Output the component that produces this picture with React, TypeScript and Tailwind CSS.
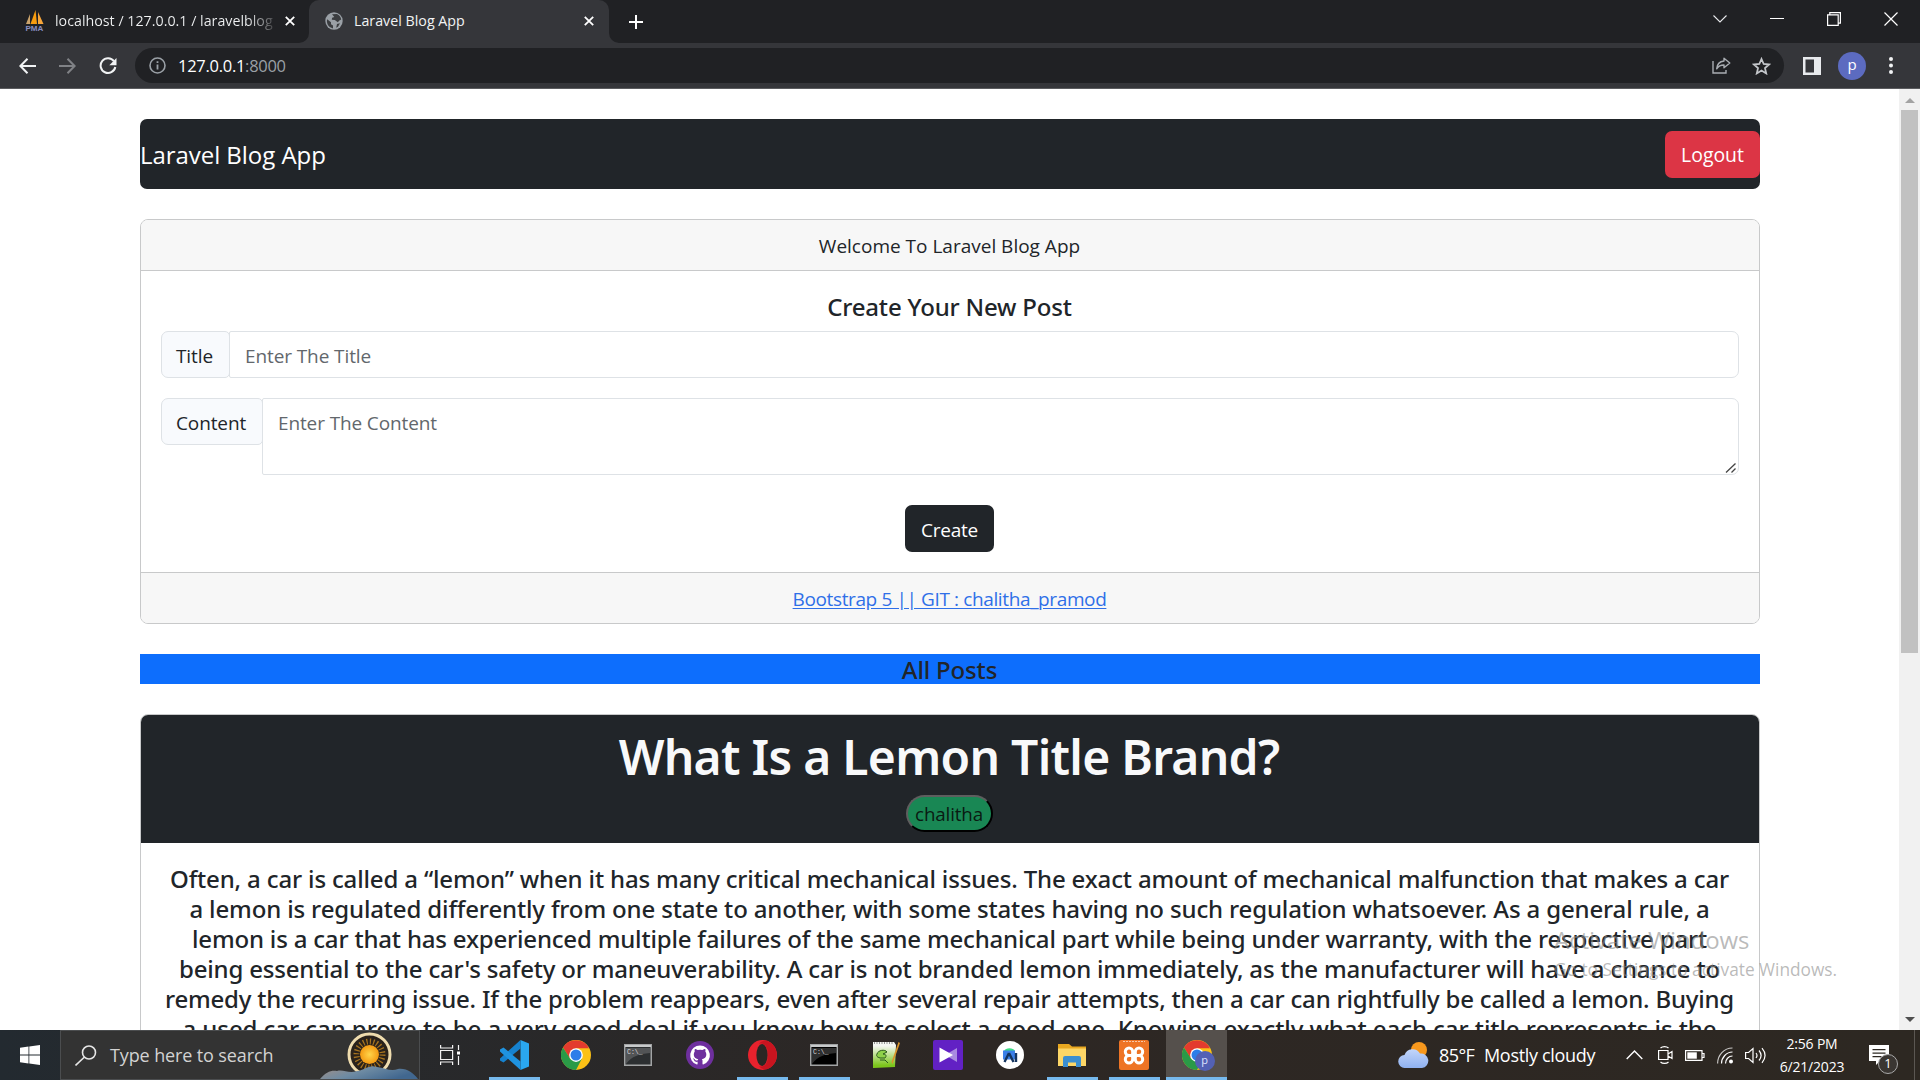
import React from "react";
import type { ReactNode } from "react";

const postLines: { text: string; tracking: string }[] = [
  { text: "Often, a car is called a “lemon” when it has many critical mechanical issues. The exact amount of mechanical malfunction that makes a car", tracking: "tracking-[-0.153px]" },
  { text: "a lemon is regulated differently from one state to another, with some states having no such regulation whatsoever. As a general rule, a", tracking: "tracking-[-0.146px]" },
  { text: "lemon is a car that has experienced multiple failures of the same mechanical part while being under warranty, with the respective part", tracking: "tracking-[-0.186px]" },
  { text: "being essential to the car's safety or maneuverability. A car is not branded lemon immediately, as the manufacturer will have a chance to", tracking: "tracking-[-0.188px]" },
  { text: "remedy the recurring issue. If the problem reappears, even after several repair attempts, then a car can rightfully be called a lemon. Buying", tracking: "tracking-[-0.202px]" },
  { text: "a used car can prove to be a very good deal if you know how to select a good one. Knowing exactly what each car title represents is the", tracking: "tracking-[-0.06px]" },
];

function PhpMyAdminIcon() {
  return (
    <svg width="22" height="22" viewBox="0 0 22 22">
      <path d="M6 4 2 14h4z" fill="#c9a26b" />
      <path d="M11.5 0 6.5 14h6.5z" fill="#f89c0e" />
      <path d="M14 2l5.5 12H14z" fill="#f8a63a" />
      <text x="1.500" y="21" fontSize="8" fontWeight="700" fill="#8a8fc0" fontFamily="Liberation Sans, sans-serif">PMA</text>
    </svg>
  );
}

function GlobeIcon() {
  return (
    <svg width="18" height="18" viewBox="0 0 18 18">
      <circle cx="9" cy="9" r="8.7" fill="#9aa0a6" />
      <path d="M2.2 7.2 6 10.3v2l2 1.2v3A7.4 7.4 0 0 1 2.200 7.200zM7 2.200 12 2c2.400 1.200 3.800 3 4.200 5.500l-1.800 1-1.600 1.700-3-2.200-3-.3.300-2 2.200-.7zM12 12l3-.8-2 3.600-1.800.9z" fill="#3b3d40" />
    </svg>
  );
}

function CloseIcon() {
  return (
    <svg width="10" height="10" viewBox="0 0 10 10" stroke="#fff" strokeWidth="1.8">
      <path d="M.8.8 9.200 9.200M9.200.8.8 9.200" />
    </svg>
  );
}

function TabStrip() {
  return (
    <div className="flex h-[43px] bg-[#202124] text-[14.25px] text-[#f1f3f4]">
      <div className="flex w-[309px] items-center pl-[24px] pb-[2px]">
        <PhpMyAdminIcon />
        <span className="ml-[9px] w-[218px] overflow-hidden whitespace-nowrap bg-linear-to-r from-[#f1f3f4] from-88% to-[#f1f3f4]/20 bg-clip-text text-transparent">
          localhost / 127.0.0.1 / laravelblog
        </span>
        <span className="ml-[12px]"><CloseIcon /></span>
      </div>
      <div className="relative flex w-[300px] items-center rounded-t-[10px] bg-[#35363a] pr-[15px] pb-[2px] pl-[16px]">
        <svg className="absolute bottom-0 -left-[10px]" width="10" height="10"><path d="M10 0v10H0A10 10 0 0 0 10 0z" fill="#35363a" /></svg>
        <svg className="absolute -right-[10px] bottom-0" width="10" height="10"><path d="M0 0v10h10A10 10 0 0 1 0 0z" fill="#35363a" /></svg>
        <GlobeIcon />
        <span className="ml-[11px] flex-1 whitespace-nowrap">Laravel Blog App</span>
        <CloseIcon />
      </div>
      <div className="flex flex-1 items-center pl-[20px]">
        <svg width="14" height="14" viewBox="0 0 14 14" stroke="#fff" strokeWidth="2"><path d="M7 0v14M0 7h14" /></svg>
      </div>
      <div className="flex h-[37px] items-center gap-[43px] pr-[22px]">
        <svg width="14" height="8" viewBox="0 0 14 8" fill="none" stroke="#e8eaed" strokeWidth="1.1"><path d="M.5.500 7 7 13.500.500" /></svg>
        <svg width="14" height="2" viewBox="0 0 14 2"><path d="M0 0h14v1H0z" fill="#fff" /></svg>
        <svg width="14" height="14" viewBox="0 0 14 14" fill="none" stroke="#fff" strokeWidth="1.200"><path d="M.6 2.800h10.600v10.600H.6zM2.800 2.800V.6h10.600v10.600h-2.200" /></svg>
        <svg width="14" height="14" viewBox="0 0 14 14" stroke="#fff" strokeWidth="1.200"><path d="M.500.500l13 13M13.500.500l-13 13" /></svg>
      </div>
    </div>
  );
}

function Toolbar() {
  return (
    <div className="flex h-[46px] items-center border-b border-[#5b5c5f] bg-[#35363a]">
      <div className="flex items-center gap-[23px] pl-[19px]">
        <svg width="17" height="16" viewBox="0 0 17 16" fill="none" stroke="#f1f3f4" strokeWidth="2"><path d="M17 8H2M8.500.800 1.400 8l7.100 7.200" /></svg>
        <svg width="17" height="16" viewBox="0 0 17 16" fill="none" stroke="#808286" strokeWidth="2"><path d="M0 8h15M8.500.800 15.600 8l-7.100 7.200" /></svg>
        <svg width="18" height="18" viewBox="0 0 18 18" fill="none"><path d="M15 4.200A7.400 7.400 0 1 0 16.300 10" stroke="#f1f3f4" strokeWidth="2" /><path d="M17.500 1v7.200h-7.200z" fill="#f1f3f4" /></svg>
      </div>
      <div className="ml-[18px] flex h-[35px] w-[1649px] items-center rounded-full bg-[#202124] pr-[13px] pl-[14px]">
        <svg width="17" height="17" viewBox="0 0 17 17" fill="none"><circle cx="8.500" cy="8.500" r="7.500" stroke="#9aa0a6" strokeWidth="1.600" /><path d="M8.500 7.500v5M8.500 4.300v1.700" stroke="#9aa0a6" strokeWidth="1.800" /></svg>
        <span className="ml-[12px] flex-1 pt-px text-[16.500px] tracking-[-0.28px] text-white">
          127.0.0.1<span className="text-[#9aa0a6]">:8000</span>
        </span>
        <svg width="19" height="17" viewBox="0 0 19 17" fill="none" stroke="#a9adb2" strokeWidth="1.400">
          <path d="M1 4v12h13v-3" /><path d="M12 1.200 17.800 6 12 10.800V8c-3.500 0-5.700 1.200-7.300 3.800C5 7.500 7.500 4.500 12 4z" strokeLinejoin="round" />
        </svg>
        <svg className="ml-[21px]" width="19" height="18" viewBox="0 0 19 18" fill="none" stroke="#c4c7cb" strokeWidth="1.800"><path d="m9.500 2 2.200 5 5.400.5-4.100 3.600 1.200 5.300-4.700-2.800-4.700 2.800L6 11.100 1.900 7.500 7.300 7z" /></svg>
      </div>
      <svg className="ml-[19px]" width="18" height="18" viewBox="0 0 18 18"><path d="M0 0h18v18H0zM2.500 2.500v13H11v-13z" fill="#e8eaed" fillRule="evenodd" /></svg>
      <div className="ml-[17px] flex size-[28px] items-center justify-center rounded-full bg-[#5c6bc0] pb-[2px] text-[15px] font-medium text-white">p</div>
      <svg className="ml-[23px]" width="4" height="17" viewBox="0 0 4 17" fill="#f1f3f4"><circle cx="2" cy="2" r="2" /><circle cx="2" cy="8.500" r="2" /><circle cx="2" cy="15" r="2" /></svg>
    </div>
  );
}

function Scrollbar() {
  return (
    <div className="flex w-[21px] flex-col items-center bg-[#f1f1f1]">
      <svg className="mt-[9px] mb-[7px]" width="10" height="5" viewBox="0 0 10 5"><path d="M0 5 5 0l5 5z" fill="#a3a3a3" /></svg>
      <div className="h-[543px] w-[17px] bg-[#c1c1c1]" />
      <svg className="mt-auto mb-[8px]" width="10" height="5" viewBox="0 0 10 5"><path d="M0 0h10L5 5z" fill="#505050" /></svg>
    </div>
  );
}

function CreatePostCard() {
  return (
    <section className="mt-[30px] flex h-[405px] flex-col overflow-hidden rounded-[8px] border border-[#c8c9ca] bg-white text-[19px]">
      <header className="flex h-[51px] items-center justify-center border-b border-[#c8c9ca] bg-[#f7f7f7] pt-[3px] pr-px">Welcome To Laravel Blog App</header>
      <div className="flex flex-1 flex-col px-[20px] pt-[20px]">
        <h5 className="h-[40px] pr-px text-center font-['Noto_Sans'] text-[24px] leading-[32px] font-medium tracking-[-0.18px]">Create Your New Post</h5>
        <div className="flex h-[47px] tracking-[-0.100px]">
          <span className="flex w-[69px] items-center rounded-l-[7px] rounded-r-[5px] border border-[#dee2e6] bg-[#f8fafd] pt-[4px] pl-[14px]">Title</span>
          <div className="-ml-px flex flex-1 items-center rounded-r-[7px] rounded-l-[2px] border border-[#dee2e6] bg-white pt-[4px] pl-[15px] text-[#62676c]">Enter The Title</div>
        </div>
        <div className="mt-[20px] flex h-[77px] items-start tracking-[-0.120px]">
          <span className="flex h-[47px] w-[102px] items-center rounded-l-[7px] rounded-r-[5px] border border-[#dee2e6] bg-[#f8fafd] pt-[4px] pl-[14px]">Content</span>
          <div className="-ml-px flex h-full flex-1 items-start justify-between rounded-r-[7px] rounded-l-[2px] border border-[#dee2e6] bg-white pt-[11px] pl-[15px] leading-[26px] text-[#62676c]">
            Enter The Content
            <svg className="mr-[1px] self-end" width="12" height="12" viewBox="0 0 12 12" stroke="#444" strokeWidth="1.300"><path d="M1 10.500 10.500 1.500M6.500 10.500l4-4" /></svg>
          </div>
        </div>
        <button className="mt-[30px] ml-[744px] h-[47px] w-[89px] rounded-[7px] bg-[#212529] pt-[4px] text-white tracking-[-0.200px]">Create</button>
      </div>
      <footer className="flex h-[51px] items-center justify-center border-t border-[#c8c9ca] bg-[#f7f7f7] pt-[2px] pr-px">
        <a className="tracking-[-0.380px] text-[#2f6fe8] underline underline-offset-2">Bootstrap 5 || GIT : chalitha_pramod</a>
      </footer>
    </section>
  );
}

function PostCard() {
  return (
    <article className="mt-[30px] h-[400px] overflow-hidden rounded-t-[8px] border border-[#c8c9ca] bg-white">
      <header className="flex h-[128px] flex-col items-center bg-[#212529] pr-[2px]">
        <h1 className="mt-[9px] font-['Noto_Sans'] text-[48px] leading-[66px] font-semibold tracking-[-0.720px] text-[#f8f9fa]">What Is a Lemon Title Brand?</h1>
        <span className="mt-[5px] flex h-[37px] w-[87px] items-center justify-center rounded-full border-2 border-t-[#5e5e5e] border-r-black border-b-black border-l-[#5e5e5e] bg-[#198754] pt-px text-[18.800px] tracking-[-0.150px] text-[#0a1a12]">chalitha</span>
      </header>
      <div className="pt-[21px] pr-px font-['Noto_Sans'] text-[24px] leading-[30px] font-medium">
        {postLines.map((line) => (
          <p key={line.text} className={"text-center whitespace-nowrap " + line.tracking}>{line.text}</p>
        ))}
      </div>
    </article>
  );
}

function Chrome({ size }: { size: number }) {
  return (
    <svg width={size} height={size} viewBox="0 0 48 48">
      <circle cx="24" cy="24" r="24" fill="#fbc116" />
      <path d="M24 13h20.800A24 24 0 0 0 3.200 12L14 29z" fill="#e33b2e" />
      <path d="M3.200 12A24 24 0 0 0 24 48l9.500-18.500L14.500 29.500z" fill="#2a9a47" />
      <circle cx="24" cy="24" r="11" fill="#fff" />
      <circle cx="24" cy="24" r="8.800" fill="#2d7de9" />
    </svg>
  );
}

function Terminal({ dark }: { dark: boolean }) {
  return (
    <svg width="28" height="22" viewBox="0 0 28 22">
      <rect x=".75" y=".75" width="26.500" height="20.500" fill={dark ? "#000" : "#2c2f31"} stroke="#a2a4a5" strokeWidth="1.500" />
      <path d="M1 2h26" stroke="#c7c9ca" strokeWidth="2" />
      <path d="M2 4h24v5C15 10 8 12 2 20z" fill="#fff" opacity=".18" />
      <text x="3" y="10" fontSize="6.500" fill="#ddd" fontFamily="Liberation Mono, monospace">C:\_</text>
    </svg>
  );
}

const apps: { name: string; open: boolean; icon: ReactNode }[] = [
  {
    name: "vscode", open: true, icon: (
      <svg width="30" height="30" viewBox="0 0 30 30">
        <path d="M21.500 0 30 3.500v23L21.500 30z" fill="#2aa7ef" />
        <path d="M21.500 0v8.500L4.500 22.500 1 20.500v-2z" fill="#1682cf" />
        <path d="M21.500 30v-8.500L4.500 7.500 1 9.500v2z" fill="#1f93e0" />
      </svg>),
  },
  { name: "chrome", open: false, icon: <Chrome size={30} /> },
  { name: "terminal", open: false, icon: <Terminal dark={false} /> },
  {
    name: "github", open: false, icon: (
      <svg width="28" height="28" viewBox="0 0 28 28">
        <circle cx="14" cy="14" r="14" fill="#6e2f9e" />
        <path d="M14 4.500a9.800 9.800 0 0 0-3.100 19.100c.5.100.7-.2.7-.5v-2.300c-2.700.6-3.300-1.200-3.300-1.200-.5-1.200-1.100-1.500-1.100-1.500-.9-.6.100-.6.100-.6 1 .1 1.500 1 1.500 1 .9 1.500 2.300 1.100 2.900.8.100-.6.300-1.100.6-1.300-2.200-.3-4.500-1.100-4.500-4.800 0-1.100.4-1.900 1-2.600-.1-.3-.4-1.300.1-2.600 0 0 .8-.3 2.700 1a9.400 9.400 0 0 1 4.900 0c1.900-1.300 2.700-1 2.700-1 .5 1.300.2 2.300.1 2.600.6.700 1 1.500 1 2.600 0 3.700-2.300 4.500-4.500 4.800.4.300.7.900.7 1.800v3.300c0 .3.200.6.7.5A9.800 9.800 0 0 0 14 4.500z" fill="#fff" />
      </svg>),
  },
  {
    name: "opera", open: true, icon: (
      <svg width="29" height="30" viewBox="0 0 29 30">
        <ellipse cx="14.500" cy="15" rx="14.500" ry="15" fill="#e8222d" />
        <path d="M19 .8A14.500 15 0 0 1 19 29.200c-3 .5-6-.5-8-3 6 2 9-4 9-11.200S17 2 11 3.800C13 1.500 16 .300 19 .800z" fill="#c9141f" />
        <ellipse cx="14" cy="15" rx="5.600" ry="11" fill="#2b2724" />
      </svg>),
  },
  { name: "command prompt", open: true, icon: <Terminal dark /> },
  {
    name: "notepad", open: false, icon: (
      <svg width="28" height="28" viewBox="0 0 28 28">
        <defs><linearGradient id="npp" x2="0" y2="1"><stop offset=".15" stopColor="#f5f7f2" /><stop offset=".9" stopColor="#7cc51c" /></linearGradient></defs>
        <path d="M1 1h21l2 3-1 22L1 27z" fill="url(#npp)" />
        <path d="M2 2h19" stroke="#777" strokeDasharray="1 1.500" strokeWidth="1.500" />
        <path d="M5 13c1-4 8-5 10-2l-4 2c3 0 4 2 2 4H8c-3-1-4-2-3-4zM8 19h5l3 3" fill="#8fd14a" stroke="#2a5a1a" strokeWidth="1" />
        <path d="m26.500 1-7 20 1 2L28 2z" fill="#d9942a" />
      </svg>),
  },
  {
    name: "player", open: false, icon: (
      <svg width="30" height="30" viewBox="0 0 30 30"><rect width="30" height="30" rx="2" fill="#6221c4" /><path d="M24 8v14l-12-7z" fill="#a98be0" /><path d="M6.500 7.500 20 15 6.500 22.500z" fill="#fff" /></svg>),
  },
  {
    name: "android studio", open: false, icon: (
      <svg width="28" height="28" viewBox="0 0 28 28"><circle cx="14" cy="14" r="14" fill="#fff" /><path d="M8 10a6 4.500 0 0 1 11 0z" fill="#3ddc84" /><path d="M7 9.500h12v9H7z" fill="#3a7fe8" /><path d="m13 12-4.500 9M13 12l4.500 9M20 12v9" stroke="#14345f" strokeWidth="2.400" fill="none" /></svg>),
  },
  {
    name: "explorer", open: true, icon: (
      <svg width="28" height="25" viewBox="0 0 28 25"><path d="M0 1h11l3 2.500h14V23H0z" fill="#e9a820" /><path d="M0 5.500h28V23H0z" fill="#fcd667" /><path d="M5 24v-9a2 2 0 0 1 2-2h14a2 2 0 0 1 2 2v9h-5v-4.500h-8V24z" fill="#3b8ed0" /></svg>),
  },
  {
    name: "xampp", open: true, icon: (
      <svg width="30" height="30" viewBox="0 0 30 30">
        <rect width="30" height="30" rx="2" fill="#ee7425" />
        <path d="M4 1.500h22" stroke="#fff" opacity=".6" strokeDasharray="2 1" />
        <path d="M15 15.500h-5a3.700 3.700 0 1 1 3.700-3.700v7.400a3.700 3.700 0 1 1-3.700-3.700h10a3.700 3.700 0 1 0-3.700-3.700v7.400a3.700 3.700 0 1 0 3.700-3.700z" fill="none" stroke="#fff" strokeWidth="3" />
        <path d="M12.500 13h5v5h-5z" fill="#fff" />
      </svg>),
  },
];

function SearchBox() {
  return (
    <div className="flex w-[360px] items-center border border-[#4b4d4f] bg-[#333] pl-[14px]">
      <svg width="22" height="21" viewBox="0 0 22 21" fill="none" stroke="#e6e6e6" strokeWidth="1.600"><circle cx="14" cy="7.500" r="6.500" /><path d="m9.500 12-9 8.500" /></svg>
      <span className="ml-[13px] text-[18px] tracking-[-0.120px] text-[#d2d2d2]">Type here to search</span>
      <svg className="ml-auto" width="99" height="48" viewBox="0 0 99 48">
        <defs>
          <radialGradient id="sun"><stop offset="0" stopColor="#ffd54a" /><stop offset="1" stopColor="#f49a12" /></radialGradient>
          <linearGradient id="hill" x2="1" y2=".4"><stop offset="0" stopColor="#a58f83" /><stop offset=".5" stopColor="#6e8ba3" /><stop offset="1" stopColor="#41678f" /></linearGradient>
        </defs>
        <circle cx="49.500" cy="23.500" r="20.500" fill="#2a221b" stroke="#efdcae" strokeWidth="3" />
        <circle cx="49.500" cy="23.500" r="13" fill="none" stroke="#a8741f" strokeWidth="6" strokeDasharray="1.200 2.200" />
        <circle cx="49.500" cy="23.500" r="9.500" fill="url(#sun)" />
        <path d="M0 48c6-7 11-9 17-8 6-2 12 3 20 0 8-1 12-7 20-4 8 1 14 5 21 2 9-1 15 4 20 10z" fill="url(#hill)" />
      </svg>
    </div>
  );
}

function Tray() {
  return (
    <div className="ml-auto flex items-center text-white">
      <svg width="31" height="26" viewBox="0 0 31 26">
        <defs><linearGradient id="cloud" x2="0" y2="1"><stop offset="0" stopColor="#c3d6fb" /><stop offset="1" stopColor="#8fb1f0" /></linearGradient></defs>
        <circle cx="21" cy="8" r="8" fill="#f7981d" />
        <path d="M7 26a6.500 6.500 0 0 1-.5-13A8.500 8.500 0 0 1 22 11.500a7.300 7.300 0 0 1 2 14.500z" fill="url(#cloud)" />
      </svg>
      <span className="ml-[10px] w-[45px] text-[18px] tracking-[-0.600px] whitespace-nowrap">85°F</span>
      <span className="w-[113px] text-[18px] tracking-[-0.320px] whitespace-nowrap">Mostly cloudy</span>
      <svg className="ml-[29px]" width="17" height="10" viewBox="0 0 17 10" fill="none" stroke="#fff" strokeWidth="1.400"><path d="M.7 9 8.500 1l7.800 8" /></svg>
      <svg className="ml-[15px]" width="15" height="18" viewBox="0 0 15 18" fill="none" stroke="#fff" strokeWidth="1.200"><path d="M.600 4.500h9.400v9H.600zM10 8l4-2.500v7L10 10M2.500 2c2-1.800 6-1.800 8 0M2.500 16c2 1.800 6 1.800 8 0" /></svg>
      <svg className="ml-[12px]" width="20" height="11" viewBox="0 0 20 11" fill="none"><path d="M.600.600h16.400v9.800H.600zM17 3.500h2v4h-2" stroke="#fff" strokeWidth="1.200" /><path d="M2.300 2.300h9.500v6.400H2.300z" fill="#fff" /></svg>
      <svg className="ml-[12px]" width="17" height="17" viewBox="0 0 17 17" fill="none" stroke="#fff" strokeWidth="1.200"><path d="M.600 16.500C.600 8 7 1 15.500 1" opacity=".75" /><path d="M4.500 16.500C4.500 10.500 9.500 5 15.500 5M8.500 16.500c0-4 3-7.500 7-7.500" /><circle cx="14" cy="14.500" r="2" fill="#fff" stroke="none" /></svg>
      <svg className="ml-[11px]" width="21" height="17" viewBox="0 0 21 17" fill="none" stroke="#fff" strokeWidth="1.200"><path d="M.600 5.500h3L8 1.500v14l-4.400-4h-3zM11 6c1.200 1.500 1.200 3.500 0 5M14 3.500c2.500 3 2.500 7 0 10M17 1.200c3.800 4.500 3.800 10 0 14.600" /></svg>
      <div className="ml-[6px] flex w-[80px] flex-col items-center text-[14px] leading-[23px] tracking-[-0.180px]">
        <span>2:56 PM</span>
        <span>6/21/2023</span>
      </div>
      <div className="relative ml-[17px] w-[45px]">
        <svg width="20" height="20" viewBox="0 0 20 20"><path d="M0 0h20v16h-9l-4 4v-4H0zM3.500 4v1.300h13V4zM3.500 7.500v1.300h13V7.500zM3.500 11v1.300h9V11z" fill="#fff" fillRule="evenodd" /></svg>
        <span className="absolute top-[9px] left-[9px] flex size-[20px] items-center justify-center rounded-full border border-[#a9a9a9] bg-[#3a3632] text-[13px] font-medium">1</span>
      </div>
      <div className="h-[50px] w-[6px] border-l border-[#5b5752]" />
    </div>
  );
}

function Taskbar() {
  return (
    <div className="flex h-[50px] bg-linear-to-r from-[#232a30] via-[#2d2724] via-50% to-[#2d2822]">
      <div className="flex w-[60px] items-center justify-center">
        <svg width="20" height="20" viewBox="0 0 20 20" fill="#fff"><path d="M0 2.800 8.500 1.600v8H0zM9.300 1.500 20 0v9.600H9.300zM0 10.400h8.500v8L0 17.200zM9.300 10.400H20V20L9.300 18.500z" /></svg>
      </div>
      <SearchBox />
      <div className="flex w-[63px] items-center pl-[20px]">
        <svg width="21" height="20" viewBox="0 0 21 20" fill="none" stroke="#f2f2f2" strokeWidth="1.200"><path d="M.600 5.500h12v9H.600zM.600 0v3h12V0M.600 20v-3h12v3M18.500 0v5M18.500 11v9" /><path d="M17 6.500h3v3h-3z" fill="#fff" stroke="none" /></svg>
      </div>
      {apps.map((app) => (
        <div key={app.name} className="flex w-[62px] flex-col items-center">
          <div className="flex h-[47px] items-center pt-[3px]">{app.icon}</div>
          {app.open && <div className="h-[3px] w-[51px] bg-[#76b9ed]" />}
        </div>
      ))}
      <div className="ml-px flex w-[61px] flex-col items-center bg-[#55504c]">
        <div className="relative flex h-[47px] items-center pt-[3px]">
          <Chrome size={30} />
          <span className="absolute top-[21px] left-[13px] flex size-[20px] items-center justify-center rounded-full bg-[#5361b5] pb-[2px] text-[11px] text-[#dfe3ff]">p</span>
        </div>
        <div className="h-[3px] w-full bg-[#76b9ed]" />
      </div>
      <Tray />
    </div>
  );
}

export default function App() {
  return (
    <div className="relative flex h-[1080px] w-[1920px] flex-col overflow-hidden bg-white font-['Open_Sans',sans-serif] text-[#212529]">
      <TabStrip />
      <Toolbar />
      <div className="flex min-h-0 flex-1">
        <main className="min-w-0 flex-1 overflow-hidden pt-[30px] pr-[139px] pl-[140px]">
          <nav className="flex h-[70px] items-center justify-between rounded-[7px] bg-[#212529] text-white">
            <span className="pt-[2px] text-[24px] tracking-[-0.050px]">Laravel Blog App</span>
            <button className="mt-px h-[47px] w-[95px] rounded-[7px] bg-[#dc3545] pt-px text-[19.400px]">Logout</button>
          </nav>
          <CreatePostCard />
          <h5 className="mt-[30px] h-[30px] bg-[#0d6efd] pr-px text-center font-['Noto_Sans'] text-[24px] leading-[32px] font-medium tracking-[-0.160px]">All Posts</h5>
          <PostCard />
        </main>
        <Scrollbar />
      </div>
      <Taskbar />
      <div className="absolute top-[923px] left-[1554px] whitespace-nowrap text-[#8c8c8c]/60">
        <div className="text-[24px] leading-[34px] tracking-[-0.100px]">Activate Windows</div>
        <div className="text-[17.300px] leading-[26px]">Go to Settings to activate Windows.</div>
      </div>
    </div>
  );
}
